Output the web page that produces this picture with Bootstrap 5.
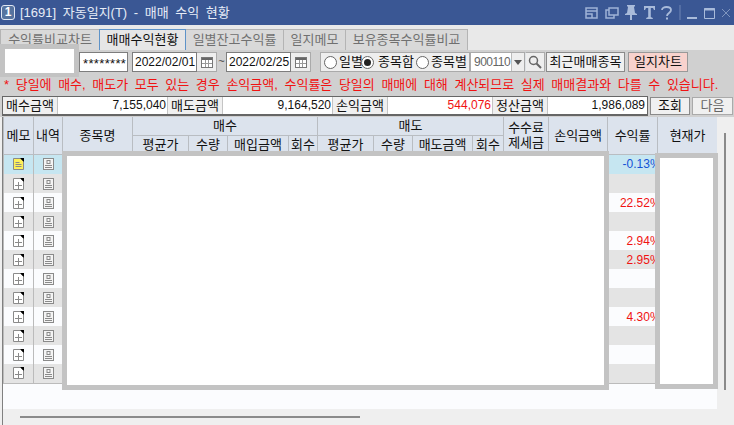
<!DOCTYPE html>
<html lang="ko">
<head>
  <meta charset="UTF-8" />
  <meta name="viewport" content="width=device-width, initial-scale=1.0"/>
  <title>자동일지</title>
  <link href="https://cdn.jsdelivr.net/npm/bootstrap@5.3.0/dist/css/bootstrap.min.css" rel="stylesheet" />
  <style>
    body {
      background: #efefef;
      overflow: hidden;
      font: 13px/18px "Liberation Sans", "Noto Sans CJK KR", sans-serif;
      color: #111;
    }
    .win { width: 734px; height: 425px; position: relative; overflow: hidden; }

    /* title bar */
    .titlebar { height: 25px; background: #3a5794; color: #e6ecf7; font-size: 13px; padding-left: 1px; }
    .win-num {
      width: 14px; height: 15px; border: 1px solid #dfe6f3; border-radius: 3px; background: #56739f;
      color: #fff; font-weight: 700; font-size: 12px; line-height: 13px; text-align: center; margin-right: 5px;
    }
    .win-title { word-spacing: 3px; }
    .win-btns { margin-left: auto; padding-right: 3px; gap: 6.5px; height: 25px; }
    .win-btns svg { display: block; }

    /* tabs */
    .tabstrip { height: 25px; background: #e9e9e9; padding: 4px 0 0 1px; }
    .tab-item {
      height: 21px; background: #d9d9d9; color: #707070; border: 1px solid #b4b4b4; border-bottom: 0;
      line-height: 19px; text-align: center; margin-left: -1px;
    }
    .tab-item.on { background: #e6e6e6; color: #111; border-color: #5e93c8; border-bottom: 0; z-index: 1; }
    .w-t1 { width: 100px; } .w-t2 { width: 87px; } .w-t3 { width: 99px; } .w-t4 { width: 63px; } .w-t5 { width: 123px; }

    /* toolbar */
    .toolbar { height: 23px; background: #d0d0d0; padding-top: 2px; padding-left: 79px; }
    .fld {
      height: 20px; background: #fff; border: 1px solid #7d7d7d; line-height: 18px; white-space: nowrap; overflow: hidden;
      flex: none;
    }
    .fld-pw { width: 49px; margin-right: 4px; padding-left: 3px; font-size: 13px; line-height: 21px; letter-spacing: .35px; }
    .fld-date { width: 65px; padding-left: 2px; font-size: 12px; }
    .btn-ic {
      height: 20px; width: 20px; background: #eee; border: 1px solid #aaa; border-left: 0; flex: none;
      display: flex; align-items: center; justify-content: center;
    }
    .tilde { width: 9px; text-align: center; color: #444; font-size: 11px; flex: none; }
    .radio-box {
      width: 150px; height: 20px; margin-left: 9px; background: #eee; border: 1px solid #aaa; padding-left: 3px; flex: none;
      line-height: 18px; white-space: nowrap;
    }
    .rd {
      width: 13px; height: 13px; border: 1px solid #666; border-radius: 50%; background: #fff; flex: none; margin-right: 2px;
      display: flex; align-items: center; justify-content: center;
    }
    .rd.on::after { content: ""; width: 7px; height: 7px; border-radius: 50%; background: #222; }
    .rd-t1 { width: 22px; flex: none; } .rd-t2 { width: 40px; flex: none; padding-left: 2px; }
    .combo { width: 55px; margin-left: 0; color: #666; padding-left: 3px; font-size: 12px; border-color: #aaa; position: relative; letter-spacing: -.5px; }
    .combo-arrow {
      position: absolute; right: 0; top: 0; width: 13px; height: 18px; background: #eee; border-left: 1px solid #bbb;
      display: flex; align-items: center; justify-content: center;
    }
    .tb-btn {
      height: 20px; background: #f0f0f0; border: 1px solid #8a8a8a; border-radius: 0; padding: 0; line-height: 18px;
      font-size: 13px; color: #111; flex: none;
    }
    .w-recent { width: 79px; margin-left: 1px; }
    .w-chart { width: 60px; margin-left: 3px; background: #f8d2cd; border-color: #999; }

    /* notice */
    .notice { height: 23px; background: #d0d0d0; color: #f01212; padding-left: 4px; line-height: 23px; white-space: nowrap; word-spacing: 3px; }

    /* summary */
    .sumrow { height: 21px; background: #d0d0d0; position: relative; }
    .sumbox { width: 646px; margin-left: 2px; height: 20px; border: 1px solid #666; border-bottom-width: 2px; background: #fff; flex: none; }
    .sum-lab { background: #f0f0f0; border-right: 1px solid #c4c4c4; text-align: center; flex: none; line-height: 17px; width: 55px; }
    .sum-val { background: #fff; border-right: 1px solid #c4c4c4; text-align: right; padding-right: 1px; line-height: 17px; font-size: 12px; flex: none; }
    .w-v1 { width: 110px; } .w-v2 { width: 110px; } .w-v3 { width: 105px; } .w-v4 { width: 99px; border-right: 0; padding-right: 2px; }
    .sum-btn { height: 18px; line-height: 16px; width: 40px; margin-left: 2px; margin-top: 1px; flex: none; }
    .sum-btn.next { width: 41px; color: #666; border-color: #aaa; }
    .loss { color: #f01212; }

    /* data grid */
    .gridwrap { height: 292px; background: #fbfcfe; border-left: 1px solid #808080; margin-left: 2px; position: relative; }
    .ledger { table-layout: fixed; width: 714px; border-collapse: collapse; }
    .ledger th {
      background: #dce3ed; font-weight: 400; text-align: center; border: 1px solid #b9bdc2; border-top: 0; padding: 0;
      overflow: hidden; white-space: nowrap; line-height: 15px;
    }
    .ledger tr.hd1 th { height: 18px; }
    .ledger tr.hd2 th { height: 19px; }
    .ledger td { height: 19px; padding: 0; border-left: 1px solid #bbb; border-right: 1px solid #bbb; text-align: center; overflow: hidden; }
    .ledger td svg { display: block; margin: 0 auto; }
    .ledger tr.alt td { background: #e4e4e4; }
    .ledger tr.sel td { background: #c6e6f1; height: 20px; }
    .ledger tr.end td { border-bottom: 1px solid #bbb; }
    .ledger td.rate { text-align: right; white-space: nowrap; font-size: 12px; border: 0; line-height: 18px; overflow: visible; }
    .ledger td.rate span { margin-right: -3px; }
    .ledger td.blank { border: 0; }
    .gain { color: #f01212; } .drop { color: #1353d6; }

    /* gray panels left over the grid */
    .mask { position: absolute; background: #fff; border: 5px solid #c3c3c3; }
    .mask-a { left: 0; top: 44px; width: 79px; height: 33px; border-top-width: 5px; border-bottom-width: 4px; }
    .mask-b { left: 62px; top: 151px; width: 547px; height: 239px; }
    .mask-c { left: 655px; top: 153px; width: 63px; height: 236px; }

    /* scrollbars */
    .vthumb { position: absolute; left: 724px; top: 133px; width: 2px; height: 257px; background: #8a8a8a; }
    .vtrack { position: absolute; left: 717px; top: 117px; width: 17px; height: 292px; background: #efefef; }
    .hscroll { height: 16px; background: #efefef; border-left: 1px solid #808080; margin-left: 2px; padding: 7px 0 0 17px; }
    .hthumb { width: 340px; height: 2px; background: #8a8a8a; }
  </style>
</head>
<body>
  <svg width="0" height="0" class="position-absolute">
    <symbol id="i-memo" viewBox="0 0 11 12">
      <path d="M.5.5h7l3 3v8H.5z" fill="#fff" stroke="#8a8a8a"/>
      <path d="M7 0h4v4z" fill="#000"/>
      <path d="M5.500 4v7M2 7.500h7" stroke="#8a8a8a" fill="none"/>
    </symbol>
    <symbol id="i-memo-on" viewBox="0 0 11 12">
      <path d="M.5.5h7l3 3v8H.5z" fill="#fdf05a" stroke="#8a8a8a"/>
      <path d="M7 0h4v4z" fill="#000"/>
      <path d="M2.500 4.500h4M2.500 6.500h6M2.500 8.500h6" stroke="#8a8a8a" fill="none"/>
    </symbol>
    <symbol id="i-note" viewBox="0 0 11 12">
      <rect x=".5" y=".5" width="10" height="11" fill="#f4f4f4" stroke="#8a8a8a"/>
      <rect x="4" y="2.500" width="3" height="3" fill="none" stroke="#8a8a8a"/>
      <path d="M2 7.500h7M2 9.500h7" stroke="#8a8a8a"/>
    </symbol>
    <symbol id="i-cal" viewBox="0 0 12 12">
      <rect x=".5" y="1.500" width="11" height="10" fill="#fff" stroke="#777"/>
      <path d="M1 2h10v2H1z" fill="#666"/>
      <path d="M4.500 4v7M7.500 4v7M1 7.500h10" stroke="#999"/>
    </symbol>
  </svg>

  <div class="win">
    <div class="titlebar d-flex align-items-center">
      <div class="win-num">1</div>
      <div class="win-title">[1691] 자동일지(T) - 매매 수익 현황</div>
      <div class="win-btns d-flex align-items-center">
        <svg width="13" height="12" fill="none" stroke="#9fb3d6" stroke-width="1.500"><path d="M1 1h11v10H1zM1 4h11M1 7h6v4"/></svg>
        <svg width="14" height="12" fill="none" stroke="#9fb3d6" stroke-width="1.500"><path d="M4 1h9v7H4zM4 3H1v8h8V8"/></svg>
        <svg width="12" height="15" fill="#a9bbda"><path d="M2 0h8v1L9 2l1 6 2 1v1H7v5H5v-5H0V9l2-1 1-6-1-1z"/></svg>
        <svg width="11" height="13" fill="#a9bbda"><path d="M0 0h11v4h-1L9 2H6.800v9l2 1v1H2.200v-1l2-1V2H2L1 4H0z"/></svg>
        <svg width="11" height="14" fill="none" stroke="#a9bbda" stroke-width="1.800"><path d="M1 4c0-4 9-4 9 0 0 3-4 3-4 6"/><path d="M6 11.500v2" stroke-width="2"/></svg>
        <svg width="2" height="15"><path d="M1 0v15" stroke="#6f86b4" stroke-width="1"/></svg>
        <svg width="10" height="12" fill="none" stroke="#a9bbda" stroke-width="2"><path d="M0 11h10"/></svg>
        <svg width="11" height="12" fill="none" stroke="#a9bbda"><path d="M.5 1.500h10v10H.5z"/><path d="M0 2.500h11" stroke-width="2"/></svg>
        <svg width="10" height="10" fill="none" stroke="#7f95bf"><path d="M1 1l8 8M9 1l-8 8"/></svg>
      </div>
    </div>

    <div class="tabstrip d-flex">
      <div class="tab-item w-t1">수익률비교차트</div>
      <div class="tab-item on w-t2">매매수익현황</div>
      <div class="tab-item w-t3">일별잔고수익률</div>
      <div class="tab-item w-t4">일지메모</div>
      <div class="tab-item w-t5">보유종목수익률비교</div>
    </div>

    <div class="toolbar d-flex">
      <div class="fld fld-pw">********</div>
      <div class="fld fld-date">2022/02/01</div>
      <div class="btn-ic"><svg width="12" height="12"><use href="#i-cal"/></svg></div>
      <div class="tilde">~</div>
      <div class="fld fld-date">2022/02/25</div>
      <div class="btn-ic"><svg width="12" height="12"><use href="#i-cal"/></svg></div>
      <div class="radio-box d-flex align-items-center">
        <span class="rd"></span><span class="rd-t1">일별</span>
        <span class="rd on"></span><span class="rd-t2">종목합</span>
        <span class="rd"></span><span>종목별</span>
      </div>
      <div class="fld combo">900110<span class="combo-arrow"><svg width="8" height="5" fill="#555"><path d="M0 0h8L4 5z"/></svg></span></div>
      <div class="btn-ic border-start"><svg width="14" height="14" fill="none" stroke="#666" stroke-width="1.500"><circle cx="5.500" cy="5.500" r="4"/><path d="M8.500 8.500l4.500 4.500" stroke-width="2"/></svg></div>
      <button class="tb-btn w-recent" type="button">최근매매종목</button>
      <button class="tb-btn w-chart" type="button">일지차트</button>
    </div>

    <div class="notice">* 당일에 매수, 매도가 모두 있는 경우 손익금액, 수익률은 당일의 매매에 대해 계산되므로 실제 매매결과와 다를 수 있습니다.</div>

    <div class="sumrow d-flex">
      <div class="sumbox d-flex">
        <div class="sum-lab">매수금액</div><div class="sum-val w-v1">7,155,040</div>
        <div class="sum-lab">매도금액</div><div class="sum-val w-v2">9,164,520</div>
        <div class="sum-lab">손익금액</div><div class="sum-val w-v3 loss">544,076</div>
        <div class="sum-lab">정산금액</div><div class="sum-val w-v4">1,986,089</div>
      </div>
      <button class="tb-btn sum-btn" type="button">조회</button>
      <button class="tb-btn sum-btn next" type="button">다음</button>
    </div>

    <div class="gridwrap">
      <table class="ledger">
        <colgroup>
          <col style="width:30px"><col style="width:29px"><col style="width:70px">
          <col style="width:56px"><col style="width:39px"><col style="width:61px"><col style="width:29px">
          <col style="width:56px"><col style="width:39px"><col style="width:60px"><col style="width:31px">
          <col style="width:45px"><col style="width:59px"><col style="width:50px"><col style="width:60px">
        </colgroup>
        <thead>
          <tr class="hd1">
            <th rowspan="2">메모</th><th rowspan="2">내역</th><th rowspan="2">종목명</th>
            <th colspan="4">매수</th><th colspan="4">매도</th>
            <th rowspan="2">수수료<br>제세금</th><th rowspan="2">손익금액</th><th rowspan="2">수익률</th><th rowspan="2">현재가</th>
          </tr>
          <tr class="hd2">
            <th>평균가</th><th>수량</th><th>매입금액</th><th>회수</th>
            <th>평균가</th><th>수량</th><th>매도금액</th><th>회수</th>
          </tr>
        </thead>
        <tbody id="rows"></tbody>
      </table>
    </div>

    <div class="hscroll"><div class="hthumb"></div></div>

    <div class="vtrack"></div>
    <div class="vthumb"></div>
    <div class="mask mask-a"></div>
    <div class="mask mask-b"></div>
    <div class="mask mask-c"></div>
  </div>

  <script>
    // 수익률 column: only some rows have a value
    const rates = { 0: '-0.13%', 2: '22.52%', 4: '2.94%', 5: '2.95%', 8: '4.30%' };
    let html = '';
    for (let i = 0; i < 12; i++) {
      const cls = [i === 0 ? 'sel' : (i % 2 ? 'alt' : ''), i === 11 ? 'end' : ''].join(' ');
      const rate = rates[i] ? `<span>${rates[i]}</span>` : '';
      const tone = i === 0 ? 'drop' : 'gain';
      html += `<tr class="${cls}">
        <td><svg width="11" height="12"><use href="#${i === 0 ? 'i-memo-on' : 'i-memo'}"/></svg></td>
        <td><svg width="11" height="12"><use href="#i-note"/></svg></td>
        <td colspan="10" class="blank"></td>
        <td class="blank"></td>
        <td class="rate ${tone}">${rate}</td>
        <td class="blank"></td>
      </tr>`;
    }
    document.getElementById('rows').innerHTML = html;
  </script>
  <script src="https://cdn.jsdelivr.net/npm/bootstrap@5.3.0/dist/js/bootstrap.bundle.min.js"></script>
</body>
</html>
